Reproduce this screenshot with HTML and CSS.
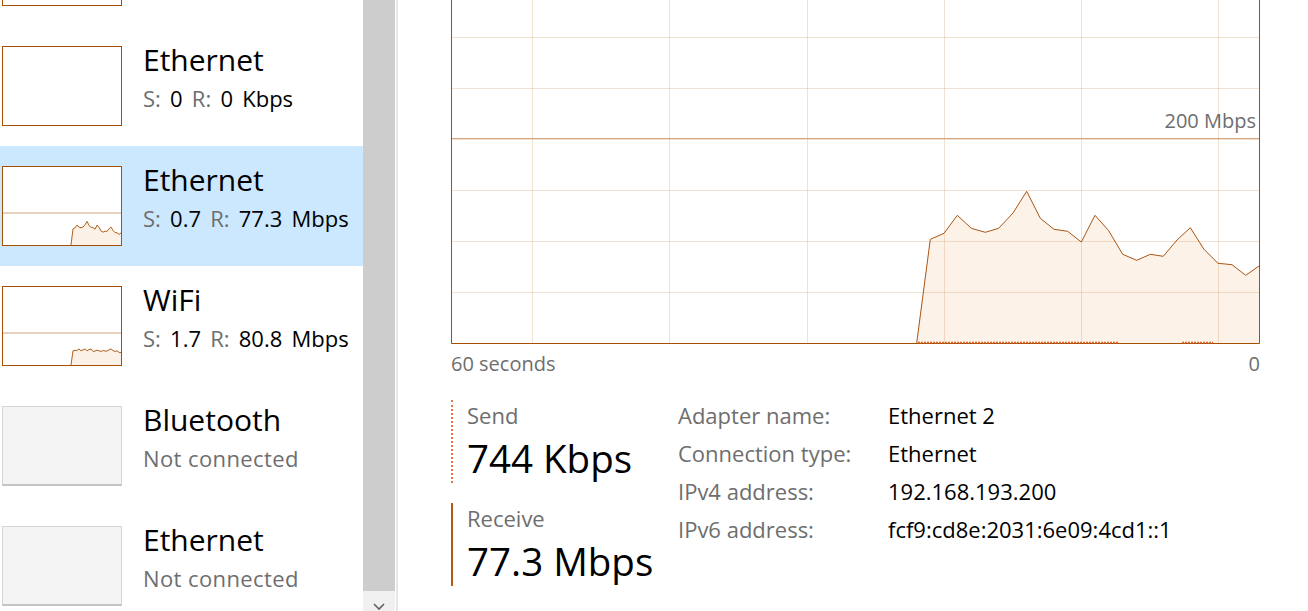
FILE: index.html
```html
<!DOCTYPE html>
<html lang="en">
<head>
<meta charset="utf-8">
<title>Task Manager - Ethernet</title>
<link rel="stylesheet" href="styles.css">
</head>
<body>
<div class="app">
  <aside class="sidebar">
    <ul class="list">
      <li class="item">
        <div class="thumb"></div>
      </li>
      <li class="item">
        <div class="thumb"></div>
        <div class="meta">
          <div class="title">Ethernet</div>
          <div class="sub"><span class="k">S:</span> 0 <span class="k">R:</span> 0 Kbps</div>
        </div>
      </li>
      <li class="item selected">
        <div class="thumb">
          <svg width="118" height="78" viewBox="0 -157 808 500" preserveAspectRatio="none">
            <line x1="0" y1="138" x2="808" y2="138" class="t-scale" vector-effect="non-scaling-stroke"/>
            <polygon class="t-fill" points="465.7,343 479.3,239.3 493,233.3 506.3,215.3 520.3,228.3 534.3,232.3 547.7,228.3 562,213 575.7,191.3 589.3,218.3 603,229.3 616.7,231.3 630.3,242 644,215.3 657.7,230.7 671.7,254.3 685.7,260.3 699.3,254.3 712.3,256.3 726,240 739.3,227.7 753,249.3 767,263.3 781,264.7 794.7,275.3 808,266 808,343"/>
            <polyline class="t-line" vector-effect="non-scaling-stroke" points="465.7,343 479.3,239.3 493,233.3 506.3,215.3 520.3,228.3 534.3,232.3 547.7,228.3 562,213 575.7,191.3 589.3,218.3 603,229.3 616.7,231.3 630.3,242 644,215.3 657.7,230.7 671.7,254.3 685.7,260.3 699.3,254.3 712.3,256.3 726,240 739.3,227.7 753,249.3 767,263.3 781,264.7 794.7,275.3 808,266"/>
          </svg>
        </div>
        <div class="meta">
          <div class="title">Ethernet</div>
          <div class="sub"><span class="k">S:</span> 0.7 <span class="k">R:</span> 77.3 Mbps</div>
        </div>
      </li>
      <li class="item">
        <div class="thumb">
          <svg width="118" height="78" viewBox="0 -157 808 500" preserveAspectRatio="none">
            <line x1="0" y1="138" x2="808" y2="138" class="t-scale" vector-effect="non-scaling-stroke"/>
            <polygon class="t-fill" points="465.7,343 479.3,252 493,249 506.3,250 520.3,240 534.3,252 547.7,246 562,240 575.7,252 589.3,244 603,240 616.7,256 630.3,254 644,248 657.7,252 671.7,256 685.7,250 699.3,254 712.3,253 726,246 739.3,240 753,250 767,256 781,252 794.7,262 808,264 808,343"/>
            <polyline class="t-line" vector-effect="non-scaling-stroke" points="465.7,343 479.3,252 493,249 506.3,250 520.3,240 534.3,252 547.7,246 562,240 575.7,252 589.3,244 603,240 616.7,256 630.3,254 644,248 657.7,252 671.7,256 685.7,250 699.3,254 712.3,253 726,246 739.3,240 753,250 767,256 781,252 794.7,262 808,264"/>
          </svg>
        </div>
        <div class="meta">
          <div class="title">WiFi</div>
          <div class="sub"><span class="k">S:</span> 1.7 <span class="k">R:</span> 80.8 Mbps</div>
        </div>
      </li>
      <li class="item">
        <div class="thumb off"></div>
        <div class="meta">
          <div class="title">Bluetooth</div>
          <div class="sub k off-text">Not connected</div>
        </div>
      </li>
      <li class="item">
        <div class="thumb off"></div>
        <div class="meta">
          <div class="title">Ethernet</div>
          <div class="sub k off-text">Not connected</div>
        </div>
      </li>
    </ul>
  </aside>

  <div class="scrollbar">
    <div class="sb-thumb"></div>
    <div class="sb-arrow">
      <svg width="12" height="8" viewBox="0 0 12 8"><polyline points="1,1 6,6 11,1" fill="none" stroke="#606060" stroke-width="1.6"/></svg>
    </div>
  </div>
  <div class="divider"></div>

  <main class="main">
    <div class="chart">
      <svg width="809" height="344" viewBox="0 0 809 344">
        <polygon class="c-fill" points="465.7,343 479.3,239.3 493,233.3 506.3,215.3 520.3,228.3 534.3,232.3 547.7,228.3 562,213 575.7,191.3 589.3,218.3 603,229.3 616.7,231.3 630.3,242 644,215.3 657.7,230.7 671.7,254.3 685.7,260.3 699.3,254.3 712.3,256.3 726,240 739.3,227.7 753,249.3 767,263.3 781,264.7 794.7,275.3 808,266 808,343"/>
        <g class="c-grid">
          <line x1="0" y1="37.5" x2="809" y2="37.5"/>
          <line x1="0" y1="88.5" x2="809" y2="88.5"/>
          <line x1="0" y1="139.5" x2="809" y2="139.5"/>
          <line x1="0" y1="190.5" x2="809" y2="190.5"/>
          <line x1="0" y1="241.5" x2="809" y2="241.5"/>
          <line x1="0" y1="292.5" x2="809" y2="292.5"/>
          <line x1="81.5" y1="0" x2="81.5" y2="343"/>
          <line x1="218.5" y1="0" x2="218.5" y2="343"/>
          <line x1="356.5" y1="0" x2="356.5" y2="343"/>
          <line x1="493.5" y1="0" x2="493.5" y2="343"/>
          <line x1="630.5" y1="0" x2="630.5" y2="343"/>
          <line x1="767.5" y1="0" x2="767.5" y2="343"/>
        </g>
        <line class="c-scale" x1="0" y1="138.5" x2="809" y2="138.5"/>
        <polyline class="c-line" points="465.7,343 479.3,239.3 493,233.3 506.3,215.3 520.3,228.3 534.3,232.3 547.7,228.3 562,213 575.7,191.3 589.3,218.3 603,229.3 616.7,231.3 630.3,242 644,215.3 657.7,230.7 671.7,254.3 685.7,260.3 699.3,254.3 712.3,256.3 726,240 739.3,227.7 753,249.3 767,263.3 781,264.7 794.7,275.3 808,266"/>
        <path class="c-border" d="M0.5 0 V343.5 H808.5 V0"/>
        <line class="c-send" x1="467" y1="342.5" x2="667" y2="342.5"/>
        <line class="c-send" x1="731" y1="342.5" x2="762" y2="342.5"/>
      </svg>
      <span class="scale-label">200 Mbps</span>
    </div>
    <div class="axis">
      <span>60 seconds</span>
      <span>0</span>
    </div>

    <section class="stats">
      <div class="rates">
        <div class="rate send">
          <div class="rate-label">Send</div>
          <div class="rate-value">744 Kbps</div>
        </div>
        <div class="rate recv">
          <div class="rate-label">Receive</div>
          <div class="rate-value">77.3 Mbps</div>
        </div>
      </div>
      <dl class="props">
        <dt>Adapter name:</dt><dd>Ethernet 2</dd>
        <dt>Connection type:</dt><dd>Ethernet</dd>
        <dt>IPv4 address:</dt><dd>192.168.193.200</dd>
        <dt>IPv6 address:</dt><dd>fcf9:cd8e:2031:6e09:4cd1::1</dd>
      </dl>
    </section>
  </main>
</div>
</body>
</html>
```

FILE: styles.css
```css
* {
  box-sizing: border-box;
  margin: 0;
  padding: 0;
}

html, body {
  width: 1308px;
  height: 611px;
  overflow: hidden;
}

body {
  font-family: "Segoe UI", "Open Sans", sans-serif;
  color: #000;
  background: #fff;
}

.app {
  display: flex;
  height: 611px;
}

/* ---------- sidebar ---------- */
.sidebar {
  width: 363px;
  flex: none;
  overflow: hidden;
}

.list {
  list-style: none;
  margin-top: -94px;
}

.item {
  display: flex;
  height: 120px;
  padding: 15px 0 0 2px;
}

.item.selected {
  background: #cce8ff;
}

.thumb {
  flex: none;
  width: 120px;
  height: 80px;
  margin-top: 5px;
  border: 1px solid #a74f01;
  background: #fff;
}

.thumb svg {
  display: block;
}

.thumb.off {
  background: #f4f4f4;
  border: 1px solid #d4d4d4;
  border-bottom: 2px solid #c4c4c4;
}

.t-scale {
  stroke: #d1a57c;
  stroke-width: 1;
}

.t-fill {
  fill: #fcf1e6;
}

.t-line {
  fill: none;
  stroke: #b0601c;
  stroke-width: 1;
}

.meta {
  margin-left: 21px;
}

.title {
  font-size: 30px;
  line-height: 38px;
}

.sub {
  font-size: 22px;
  line-height: 30px;
  margin-top: 4px;
  word-spacing: 3.5px;
}

.sub.off-text {
  letter-spacing: 0.4px;
  word-spacing: 0;
}

.k {
  color: #6e6e6e;
}

/* ---------- scrollbar ---------- */
.scrollbar {
  flex: none;
  width: 32px;
  background: #f0f0f0;
  display: flex;
  flex-direction: column;
}

.sb-thumb {
  height: 592px;
  background: #cdcdcd;
}

.sb-arrow {
  display: flex;
  justify-content: center;
  padding-top: 12px;
}

.sb-arrow svg {
  display: block;
}

.divider {
  flex: none;
  width: 2px;
  margin-left: 1px;
  background: #e6e6e6;
}

/* ---------- main ---------- */
.main {
  flex: 1;
  padding-left: 53px;
}

.chart {
  position: relative;
  width: 809px;
  height: 344px;
}

.chart svg {
  display: block;
}

.c-fill {
  fill: #fcf2e8;
}

.c-grid line {
  stroke: rgba(205, 145, 90, 0.27);
  stroke-width: 1;
}

.c-scale {
  stroke: #d5a57b;
  stroke-width: 1;
}

.c-line {
  fill: none;
  stroke: #a95616;
  stroke-width: 1;
}

.c-border {
  fill: none;
  stroke: #a74f01;
  stroke-width: 1;
}

.c-send {
  stroke: #e0662f;
  stroke-width: 1.5;
  stroke-dasharray: 2 1;
}

.scale-label {
  position: absolute;
  right: 4px;
  top: 109px;
  font-size: 20px;
  line-height: 24px;
  color: #6e6e6e;
}

.axis {
  display: flex;
  justify-content: space-between;
  width: 809px;
  margin-top: 8px;
  font-size: 20px;
  line-height: 24px;
  color: #6e6e6e;
}

.stats {
  display: flex;
  margin-top: 24px;
}

.rates {
  width: 227px;
  flex: none;
}

.rate {
  height: 83px;
  padding-left: 14px;
}

.rate.send {
  border-left: 2px dotted #e0773e;
}

.rate.recv {
  margin-top: 20px;
  border-left: 2px solid #b35a0c;
}

.rate-label {
  font-size: 22px;
  line-height: 30px;
  color: #6e6e6e;
}

.rate-value {
  font-size: 38.5px;
  line-height: 50px;
  margin-top: 3px;
}

.props {
  display: grid;
  grid-template-columns: 210px auto;
  row-gap: 8px;
  align-content: start;
  font-size: 22px;
  line-height: 30px;
}

.props dt {
  color: #6e6e6e;
}
```
